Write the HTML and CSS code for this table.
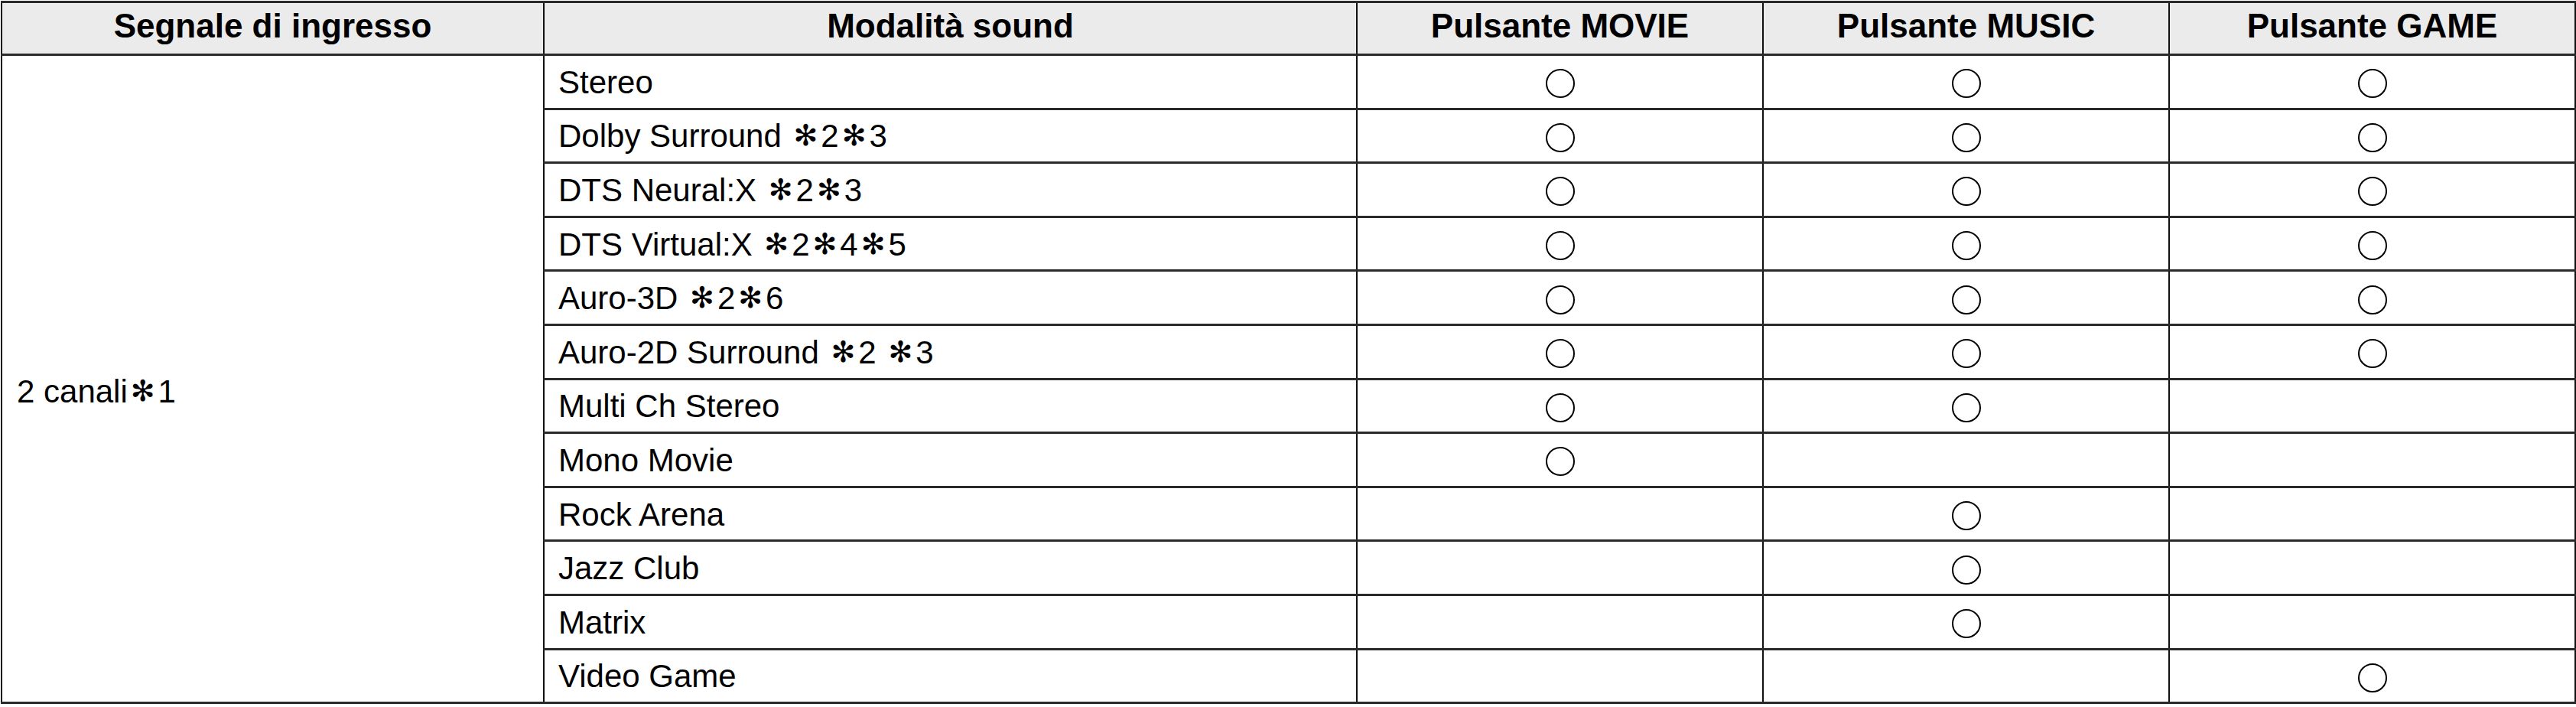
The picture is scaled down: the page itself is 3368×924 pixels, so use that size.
FILE: index.html
```html
<!DOCTYPE html>
<html lang="it">
<head>
<meta charset="utf-8">
<title>Modalità sound</title>
<link rel="stylesheet" href="styles.css">
</head>
<body>
<table class="modes">
  <colgroup>
    <col class="c-signal">
    <col class="c-mode">
    <col class="c-btn">
    <col class="c-btn">
    <col class="c-btn">
  </colgroup>
  <thead>
    <tr>
      <th>Segnale di ingresso</th>
      <th>Modalità sound</th>
      <th>Pulsante MOVIE</th>
      <th>Pulsante MUSIC</th>
      <th>Pulsante GAME</th>
    </tr>
  </thead>
  <tbody>
    <tr>
      <td class="signal" rowspan="12"><span class="signal-text">2 canali<span class="ast">✻</span>1</span></td>
      <td class="mode">Stereo</td>
      <td class="mark"><span class="dot"></span></td>
      <td class="mark"><span class="dot"></span></td>
      <td class="mark"><span class="dot"></span></td>
    </tr>
    <tr>
      <td class="mode">Dolby Surround <span class="ast">✻</span>2<span class="ast">✻</span>3</td>
      <td class="mark"><span class="dot"></span></td>
      <td class="mark"><span class="dot"></span></td>
      <td class="mark"><span class="dot"></span></td>
    </tr>
    <tr>
      <td class="mode">DTS Neural:X <span class="ast">✻</span>2<span class="ast">✻</span>3</td>
      <td class="mark"><span class="dot"></span></td>
      <td class="mark"><span class="dot"></span></td>
      <td class="mark"><span class="dot"></span></td>
    </tr>
    <tr>
      <td class="mode">DTS Virtual:X <span class="ast">✻</span>2<span class="ast">✻</span>4<span class="ast">✻</span>5</td>
      <td class="mark"><span class="dot"></span></td>
      <td class="mark"><span class="dot"></span></td>
      <td class="mark"><span class="dot"></span></td>
    </tr>
    <tr>
      <td class="mode">Auro-3D <span class="ast">✻</span>2<span class="ast">✻</span>6</td>
      <td class="mark"><span class="dot"></span></td>
      <td class="mark"><span class="dot"></span></td>
      <td class="mark"><span class="dot"></span></td>
    </tr>
    <tr>
      <td class="mode">Auro-2D Surround <span class="ast">✻</span>2 <span class="ast">✻</span>3</td>
      <td class="mark"><span class="dot"></span></td>
      <td class="mark"><span class="dot"></span></td>
      <td class="mark"><span class="dot"></span></td>
    </tr>
    <tr>
      <td class="mode">Multi Ch Stereo</td>
      <td class="mark"><span class="dot"></span></td>
      <td class="mark"><span class="dot"></span></td>
      <td class="mark"></td>
    </tr>
    <tr>
      <td class="mode">Mono Movie</td>
      <td class="mark"><span class="dot"></span></td>
      <td class="mark"></td>
      <td class="mark"></td>
    </tr>
    <tr>
      <td class="mode">Rock Arena</td>
      <td class="mark"></td>
      <td class="mark"><span class="dot"></span></td>
      <td class="mark"></td>
    </tr>
    <tr>
      <td class="mode">Jazz Club</td>
      <td class="mark"></td>
      <td class="mark"><span class="dot"></span></td>
      <td class="mark"></td>
    </tr>
    <tr>
      <td class="mode">Matrix</td>
      <td class="mark"></td>
      <td class="mark"><span class="dot"></span></td>
      <td class="mark"></td>
    </tr>
    <tr>
      <td class="mode">Video Game</td>
      <td class="mark"></td>
      <td class="mark"></td>
      <td class="mark"><span class="dot"></span></td>
    </tr>
  </tbody>
</table>
</body>
</html>
```
FILE: styles.css
```css
html, body {
  margin: 0;
  padding: 0;
  background: #ffffff;
}

body {
  padding: 1px 0 0 1px;
  font-family: "Liberation Sans", Arial, sans-serif;
  color: #000000;
}

.modes {
  border-collapse: collapse;
  table-layout: fixed;
  width: 3365px;
  font-size: 42px;
  line-height: 1;
}

.c-signal { width: 709px; }
.c-mode { width: 1063px; }
.c-btn { width: 531px; }

.modes th,
.modes td {
  border-left: 2px solid #111111;
  border-right: 2px solid #111111;
  border-top: 3px solid #2a2a2a;
  border-bottom: 3px solid #2a2a2a;
  padding: 0;
  height: 65.6px;
  vertical-align: middle;
}

.modes th {
  background: #ebebeb;
  font-weight: bold;
  font-size: 44px;
  text-align: center;
  height: 60px;
  padding-bottom: 6px;
}

.modes td.mode {
  text-align: left;
  padding-left: 18px;
  padding-top: 2px;
}

.modes td.signal {
  text-align: left;
  padding-left: 19px;
  padding-top: 34px;
}

.modes td.mark {
  text-align: center;
}

.ast {
  font-family: "DejaVu Sans", sans-serif;
  font-size: 38px;
  font-weight: normal;
  color: #000000;
  margin: 0 4px;
  position: relative;
  top: -2px;
}

.dot {
  display: inline-block;
  width: 34px;
  height: 34px;
  border: 2px solid #000000;
  border-radius: 50%;
  vertical-align: middle;
}
```
